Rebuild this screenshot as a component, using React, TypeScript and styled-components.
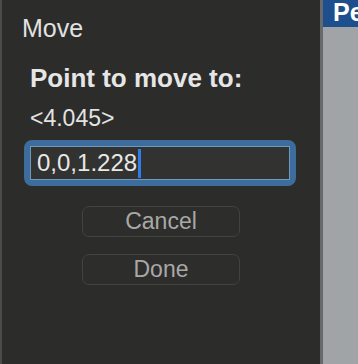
import React from 'react'
import styled, { createGlobalStyle } from 'styled-components'

const GlobalStyle = createGlobalStyle`
  html, body {
    margin: 0;
    padding: 0;
    background: #2c2c2a;
  }
  body {
    font-family: 'Liberation Sans', Arial, Helvetica, sans-serif;
    -webkit-font-smoothing: antialiased;
  }
`

const Screen = styled.div`
  display: flex;
  height: 364px;
  width: 358px;
  overflow: hidden;
`

const LeftEdge = styled.div`
  width: 2px;
  flex-shrink: 0;
  background: #4b4b49;
`

const Dialog = styled.div`
  width: 318px;
  flex-shrink: 0;
  background: #2c2c2a;
  padding: 13px 20px 0;
  box-sizing: border-box;
  display: flex;
  flex-direction: column;
`

const Title = styled.div`
  font-size: 25px;
  line-height: 30px;
  color: #e2e2e2;
`

const Prompt = styled.div`
  margin: 20px 0 0 8px;
  font-size: 26px;
  line-height: 30px;
  font-weight: 700;
  color: #e6e6e6;
`

const Current = styled.div`
  margin: 12px 0 0 8px;
  font-size: 23px;
  line-height: 26px;
  color: #e2e2e2;
`

const FocusRing = styled.div`
  margin: 9px 0 0 2px;
  width: 272px;
  height: 46px;
  box-sizing: border-box;
  border: 6px solid #3d6d9d;
  border-radius: 8px;
  display: flex;
`

const Field = styled.div`
  flex: 1;
  border: 1px solid #7097c0;
  background: #323230;
  display: flex;
  align-items: center;
  padding-left: 6px;
  font-size: 24px;
  color: #e8e8e8;
`

const Caret = styled.span`
  display: inline-block;
  width: 3px;
  height: 29px;
  margin-left: 1px;
  background: #2f7de8;
`

const Actions = styled.div`
  margin-top: 20px;
  display: flex;
  flex-direction: column;
  align-items: center;
  gap: 17px;
`

const Button = styled.button`
  width: 158px;
  height: 31px;
  box-sizing: border-box;
  border: 1.5px solid #424240;
  border-radius: 7px;
  background: #2d2d2b;
  color: #a8a8a8;
  font-family: 'Liberation Sans', Arial, sans-serif;
  font-size: 23px;
  line-height: 1;
  padding: 0;
`

const Divider = styled.div`
  width: 3px;
  flex-shrink: 0;
  background: #68696a;
`

const SidePanel = styled.div`
  flex: 1;
  background: #a0a4a7;
  display: flex;
  flex-direction: column;
`

const SideHeader = styled.div`
  height: 27px;
  background: #1d4e8d;
  color: #ffffff;
  font-size: 25px;
  font-weight: 700;
  line-height: 24px;
  padding-left: 10px;
  white-space: nowrap;
  overflow: hidden;
`

export default function App() {
  return (
    <>
      <GlobalStyle />
      <Screen>
        <LeftEdge />
        <Dialog>
          <Title>Move</Title>
          <Prompt>Point to move to:</Prompt>
          <Current>&lt;4.045&gt;</Current>
          <FocusRing>
            <Field>
              0,0,1.228
              <Caret />
            </Field>
          </FocusRing>
          <Actions>
            <Button>Cancel</Button>
            <Button>Done</Button>
          </Actions>
        </Dialog>
        <Divider />
        <SidePanel>
          <SideHeader>Pe</SideHeader>
        </SidePanel>
      </Screen>
    </>
  )
}
